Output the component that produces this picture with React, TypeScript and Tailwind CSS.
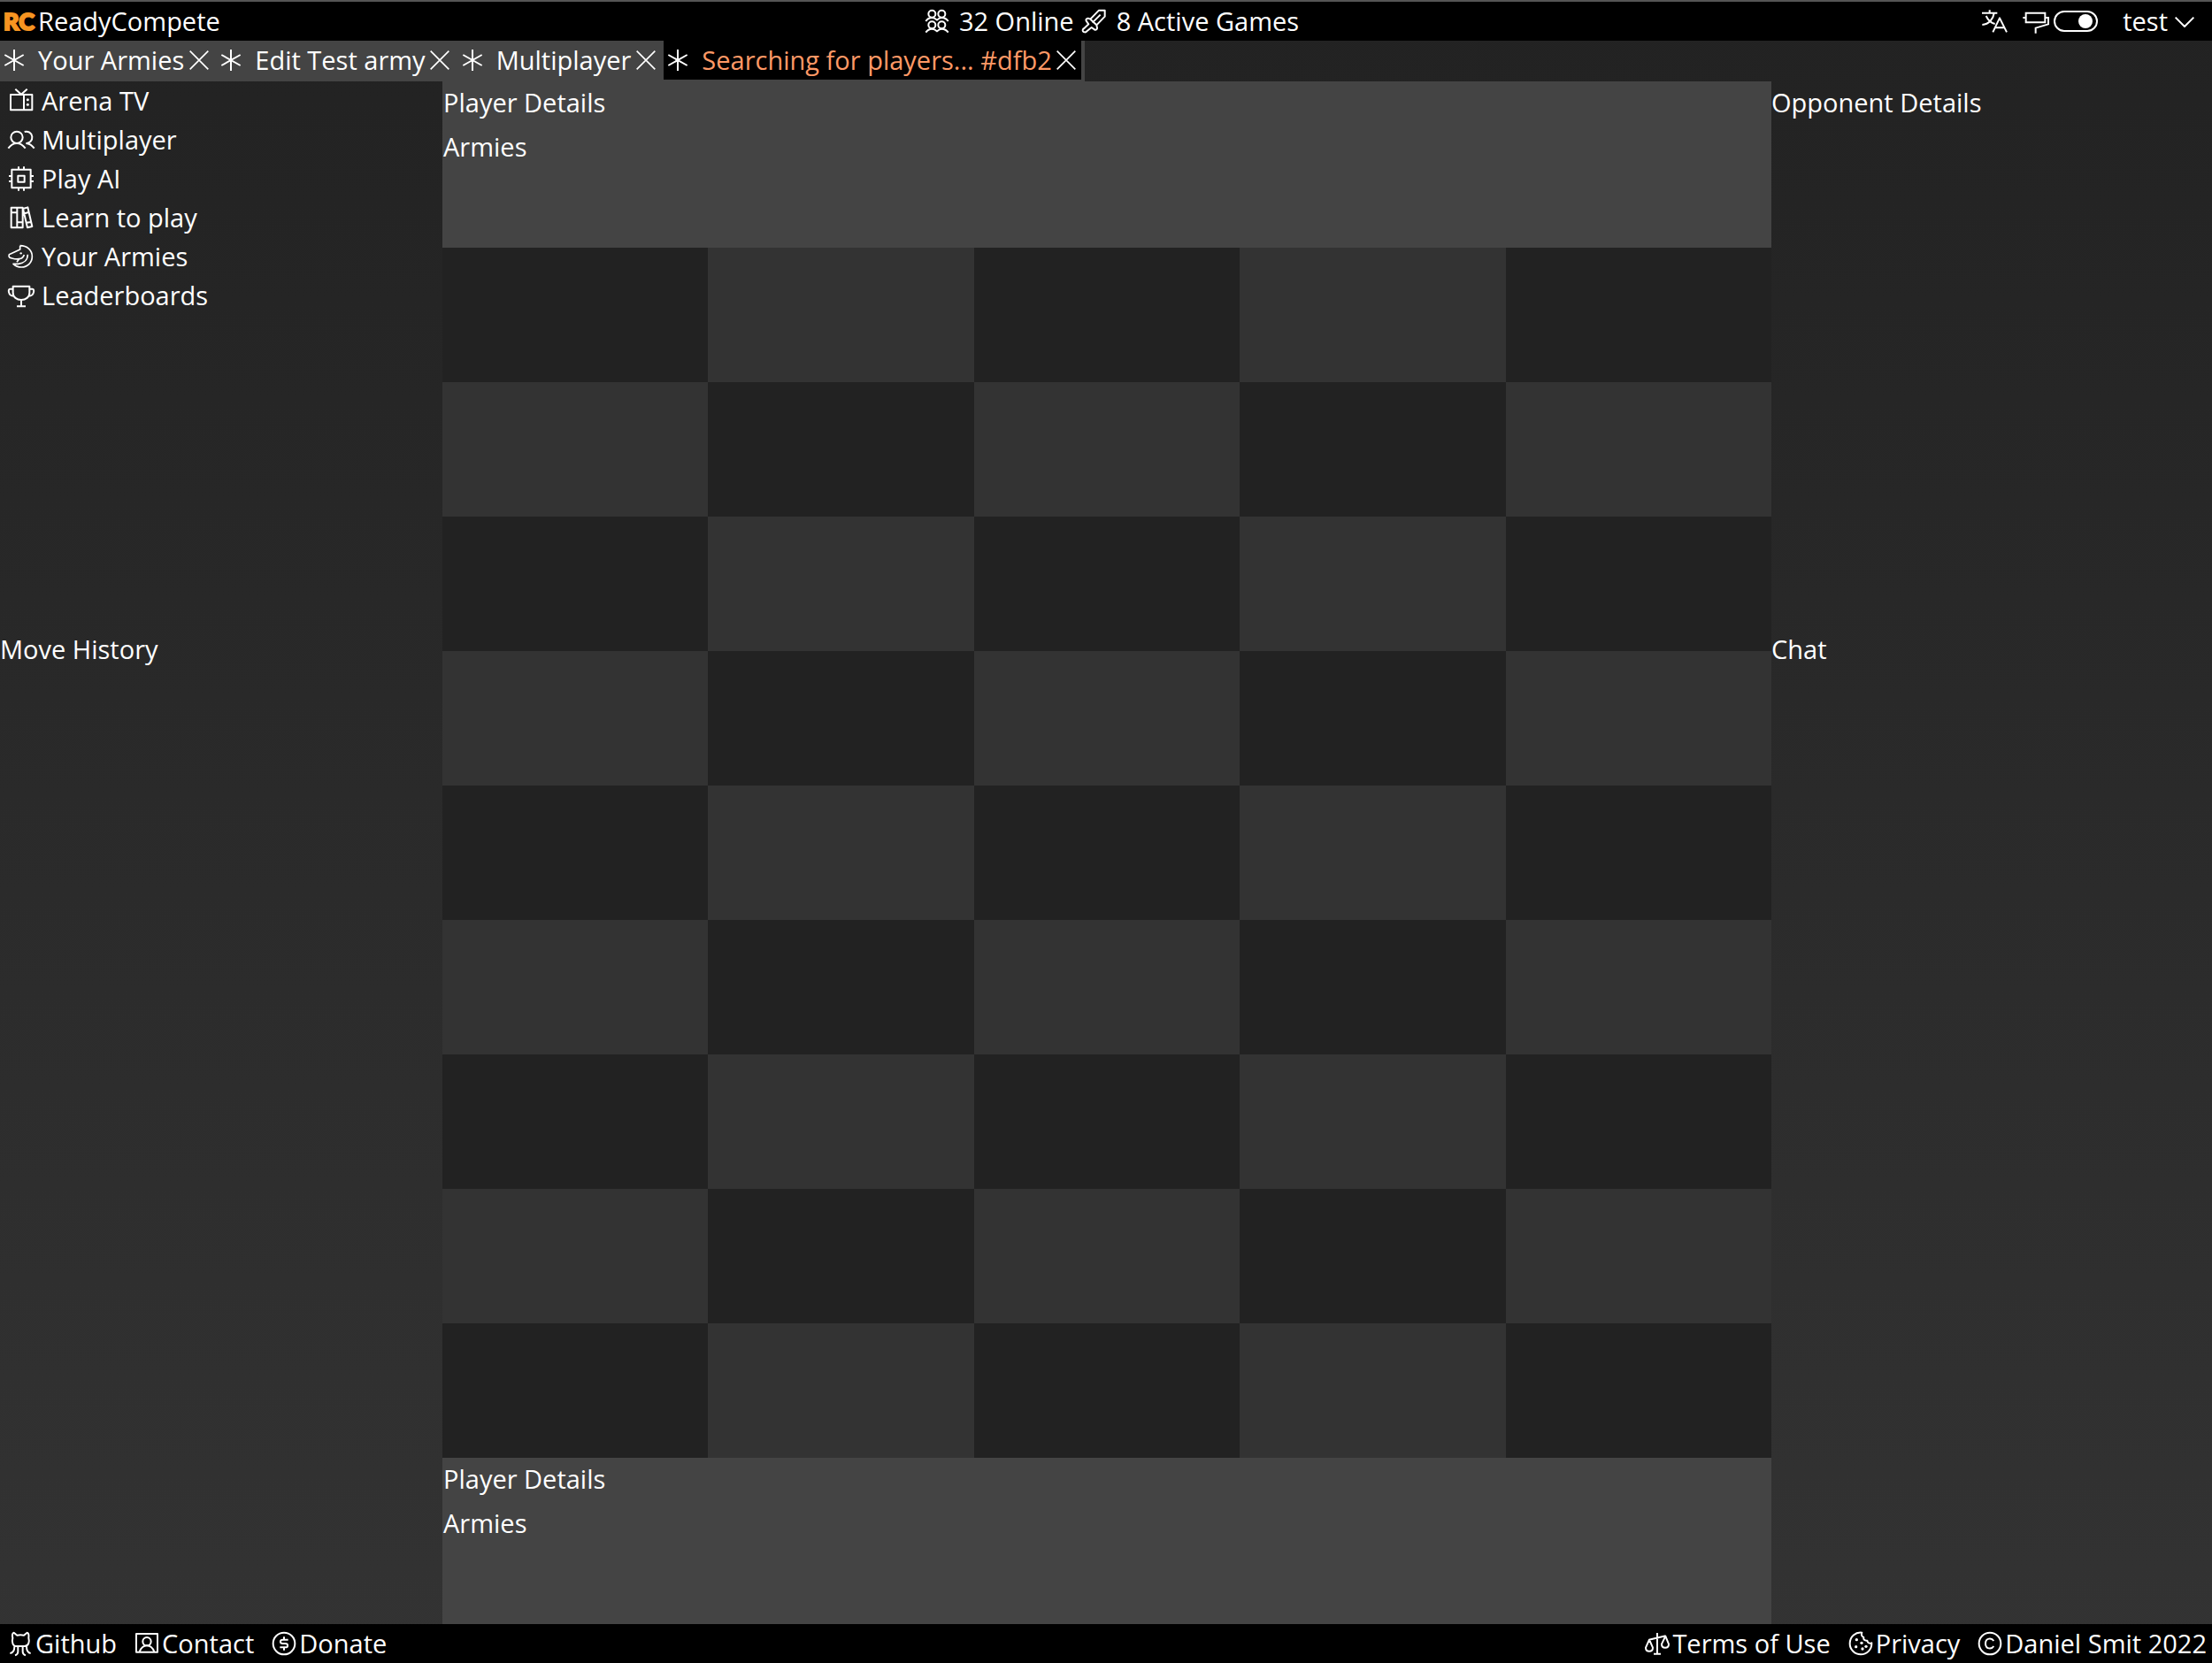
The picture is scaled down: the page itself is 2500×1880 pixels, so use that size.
import type { ReactNode } from "react";

function Icon({ children, className = "size-[30px]" }: { children: ReactNode; className?: string }) {
  return (
    <svg
      viewBox="0 0 90 90"
      className={`shrink-0 overflow-visible ${className}`}
      fill="none"
      stroke="currentColor"
      strokeWidth="6"
      strokeLinejoin="round"
      aria-hidden="true"
    >
      {children}
    </svg>
  );
}

const Tv = () => (
  <Icon>
    <rect x="9" y="24" width="73" height="52" />
    <path d="M54 24V76M25 5L45 23L65 5" />
    <circle cx="67" cy="41" r="4.5" fill="currentColor" stroke="none" />
    <circle cx="67" cy="58" r="4.5" fill="currentColor" stroke="none" />
  </Icon>
);

const Users = () => (
  <Icon>
    <circle cx="30" cy="37" r="20" />
    <path d="M1 74C10 62 20 57 30 57S50 62 59 74M56 18A20 20 0 1 1 61 57M61 57C72 58 82 64 89 74" />
  </Icon>
);

const Cpu = () => (
  <Icon>
    <rect x="13" y="14" width="64" height="62" />
    <rect x="34" y="35" width="22" height="21" />
    <path d="M36 4V14M54 4V14M36 76V86M54 76V86M3 36H13M3 54H13M77 36H87M77 54H87" />
  </Icon>
);

const Books = () => (
  <Icon>
    <path d="M11 11H31V79H11ZM31 11H50V79H31ZM11 28H31M31 61H50M51 15L67 10L82 75L66 79ZM55 31L71 27M62 63L79 59" />
  </Icon>
);

const Horse = () => (
  <Icon>
    <path d="M41 8V21L4 38C2 44 4 49 10 50C18 52 26 55 38 53L30 64M41 8C65 8 82 24 82 45C82 66 66 81 46 81C34 81 26 78 18 70H35C54 68 67 56 67 38M38 53C47 52 53 46 55 39" strokeWidth="5" />
    <circle cx="44" cy="34" r="3.5" fill="currentColor" stroke="none" />
  </Icon>
);

const Trophy = () => (
  <Icon>
    <path d="M17 14H73V36C73 51 60 60 45 60S17 51 17 36ZM17 23H7C2 23 2 29 3 34C5 43 10 47 20 47M73 23H83C88 23 88 29 87 34C85 43 80 47 70 47M45 60V82M30 82H60" />
  </Icon>
);

const Crowd = () => (
  <Icon>
    <circle cx="28" cy="20" r="12" />
    <circle cx="61" cy="20" r="12" />
    <path d="M7 45C13 36 20 33 28 33S40 36 45 41C50 36 54 33 61 33S77 36 83 45" />
    <circle cx="28" cy="58" r="12" />
    <circle cx="61" cy="58" r="12" />
    <path d="M7 83C13 74 20 71 28 71S40 74 45 79C50 74 54 71 61 71S77 74 83 83" />
  </Icon>
);

const Sword = () => (
  <Icon>
    <path d="M80 8H60L31 38L23 35C17 36 15 40 17 44L25 55L10 69C5 71 4 76 6 79C9 83 14 83 18 80L20 78L35 66L46 74C51 75 54 72 54 68L52 58L80 29ZM65 23L38 50M31 38L52 58" />
  </Icon>
);

const Translate = () => (
  <Icon>
    <path d="M3 17H55M29 7V17M17 27C24 42 34 51 47 54M44 18C41 38 27 55 4 57M40 82L63 34L87 82M48 67H79" />
  </Icon>
);

const Roller = () => (
  <Icon>
    <path d="M14 17H79V49H14ZM4 33H14M79 33H90V55L47 68V86" strokeLinejoin="miter" />
  </Icon>
);

const Octocat = () => (
  <Icon>
    <path d="M23 8L34 17Q45 15 57 17L68 8C74 9 74 18 73 26C75 34 75 40 73 44C70 52 64 54 59 54H33C27 54 21 52 19 44C17 40 17 34 19 26C17 18 17 9 23 8ZM25 55C25 70 21 77 10 78M37 55V73Q37 82 27 85M53 55V73Q53 82 63 85M66 55C66 70 70 77 80 78" />
  </Icon>
);

const ContactCard = () => (
  <Icon>
    <rect x="9" y="12" width="72" height="62" />
    <circle cx="45" cy="38" r="14" />
    <path d="M20 73C26 58 34 52 45 52S64 58 70 73" />
  </Icon>
);

const Dollar = () => (
  <Icon>
    <circle cx="45" cy="45" r="37" />
    <path d="M59 32H41C30 32 30 45 41 45H49C60 45 60 58 49 58H31M45 22V32M45 58V68" />
  </Icon>
);

const Scales = () => (
  <Icon>
    <path d="M45 9V80M33 80H57M17 32L74 19M18 32L6 59C6 75 30 75 30 59ZM73 20L60 47C60 63 84 63 84 47Z" />
  </Icon>
);

const Cookie = () => (
  <Icon>
    <path d="M49 8C28 5 8 22 8 45C8 66 25 82 45 82C66 82 83 65 82 43C75 46 68 43 67 35C58 36 53 31 55 24C48 21 46 14 49 8Z" />
    <g fill="currentColor" stroke="none">
      <circle cx="31" cy="32" r="5" />
      <circle cx="48" cy="43" r="5" />
      <circle cx="29" cy="56" r="5" />
      <circle cx="51" cy="63" r="5" />
      <circle cx="63" cy="55" r="5" />
    </g>
  </Icon>
);

const Copyright = () => (
  <Icon>
    <circle cx="45" cy="45" r="37" />
    <path d="M58 36C51 25 30 25 30 45S51 65 58 54" />
  </Icon>
);

const menu = [
  { label: "Arena TV", icon: <Tv /> },
  { label: "Multiplayer", icon: <Users /> },
  { label: "Play AI", icon: <Cpu /> },
  { label: "Learn to play", icon: <Books /> },
  { label: "Your Armies", icon: <Horse /> },
  { label: "Leaderboards", icon: <Trophy /> },
];

const tabs = [
  { label: "Your Armies", active: false },
  { label: "Edit Test army", active: false },
  { label: "Multiplayer", active: false },
  { label: "Searching for players... #dfb2", active: true },
];

function FooterLink({ icon, label }: { icon: ReactNode; label: string }) {
  return (
    <a href="#" className="flex items-center gap-0.5">
      {icon}
      {label}
    </a>
  );
}

function PlayerPanel() {
  return (
    <section className="flex h-[188px] flex-col gap-0.5 bg-[#444] pl-px">
      <h2 className="leading-[48px]">Player Details</h2>
      <h3 className="leading-[48px]">Armies</h3>
    </section>
  );
}

export default function App() {
  return (
    <div className="flex min-h-screen flex-col bg-linear-to-b from-[#222] to-[#333] font-['Open_Sans',sans-serif] text-[29px] leading-[44px] text-white">
      <header className="grid grid-cols-[1fr_auto_1fr] items-center border-t-2 border-[#555] bg-black">
        <a href="#" className="flex items-center pl-1">
          <span className="w-[39px] font-['Lato',sans-serif] text-[27px] font-black text-[#f79421] [-webkit-text-stroke:2px_#f79421]">
            RC
          </span>
          ReadyCompete
        </a>
        <div className="flex gap-2 pl-3">
          <span className="flex items-center gap-2.5">
            <Crowd />
            32 Online
          </span>
          <span className="flex items-center gap-2.5">
            <Sword />
            8 Active Games
          </span>
        </div>
        <div className="flex items-center justify-end pr-4">
          <button type="button" aria-label="Language" className="mr-4">
            <Translate />
          </button>
          <label htmlFor="theme" aria-label="Dark theme" className="mr-1.5">
            <Roller />
          </label>
          <input
            id="theme"
            type="checkbox"
            role="switch"
            defaultChecked
            className="mr-7 flex h-6 w-[50px] appearance-none items-center rounded-full border-2 border-white px-1 before:size-4 before:rounded-full before:bg-white checked:justify-end"
          />
          <button type="button" className="flex items-center gap-1">
            test
            <Icon>
              <path d="M14 32L45 63L76 32" />
            </Icon>
          </button>
        </div>
      </header>

      <nav className="flex" aria-label="Open tabs">
        {tabs.map((tab) => (
          <div
            key={tab.label}
            className={`flex border-r-4 border-b-2 border-[#444] ${tab.active ? "bg-black" : "bg-[#444]"}`}
          >
            <button type="button" className="flex items-center gap-3 pl-px">
              <Icon>
                <path d="M45 9V81M13 27L77 63M13 63L77 27" />
              </Icon>
              <span className={tab.active ? "text-[#ff9966]" : "text-white"}>{tab.label}</span>
            </button>
            <button type="button" aria-label={`Close ${tab.label}`} className="flex w-[33px] items-center justify-center">
              <Icon>
                <path d="M14 14L76 76M14 76L76 14" strokeWidth="5" />
              </Icon>
            </button>
          </div>
        ))}
      </nav>

      <main className="grid flex-1 grid-cols-[500fr_1502fr_498fr]">
        <aside className="grid grid-rows-[618fr_1126fr]">
          <ul className="pl-[9px]">
            {menu.map((item) => (
              <li key={item.label}>
                <a href="#" className="flex items-center gap-2">
                  {item.icon}
                  {item.label}
                </a>
              </li>
            ))}
          </ul>
          <h2 className="leading-[48px]">Move History</h2>
        </aside>

        <div className="flex flex-col">
          <PlayerPanel />
          <div className="grid flex-1 grid-cols-5 grid-rows-9">
            {Array.from({ length: 45 }, (_, i) => (
              <div key={i} className={i % 2 === 0 ? "bg-[#222]" : "bg-[#333]"} />
            ))}
          </div>
          <PlayerPanel />
        </div>

        <aside className="grid grid-rows-[618fr_1126fr]">
          <h2 className="leading-[48px]">Opponent Details</h2>
          <h2 className="leading-[48px]">Chat</h2>
        </aside>
      </main>

      <footer className="flex justify-between bg-black pr-1.5 pl-2">
        <div className="flex gap-[19px]">
          <FooterLink icon={<Octocat />} label="Github" />
          <FooterLink icon={<ContactCard />} label="Contact" />
          <FooterLink icon={<Dollar />} label="Donate" />
        </div>
        <div className="flex gap-[19px]">
          <FooterLink icon={<Scales />} label="Terms of Use" />
          <FooterLink icon={<Cookie />} label="Privacy" />
          <FooterLink icon={<Copyright />} label="Daniel Smit 2022" />
        </div>
      </footer>
    </div>
  );
}
